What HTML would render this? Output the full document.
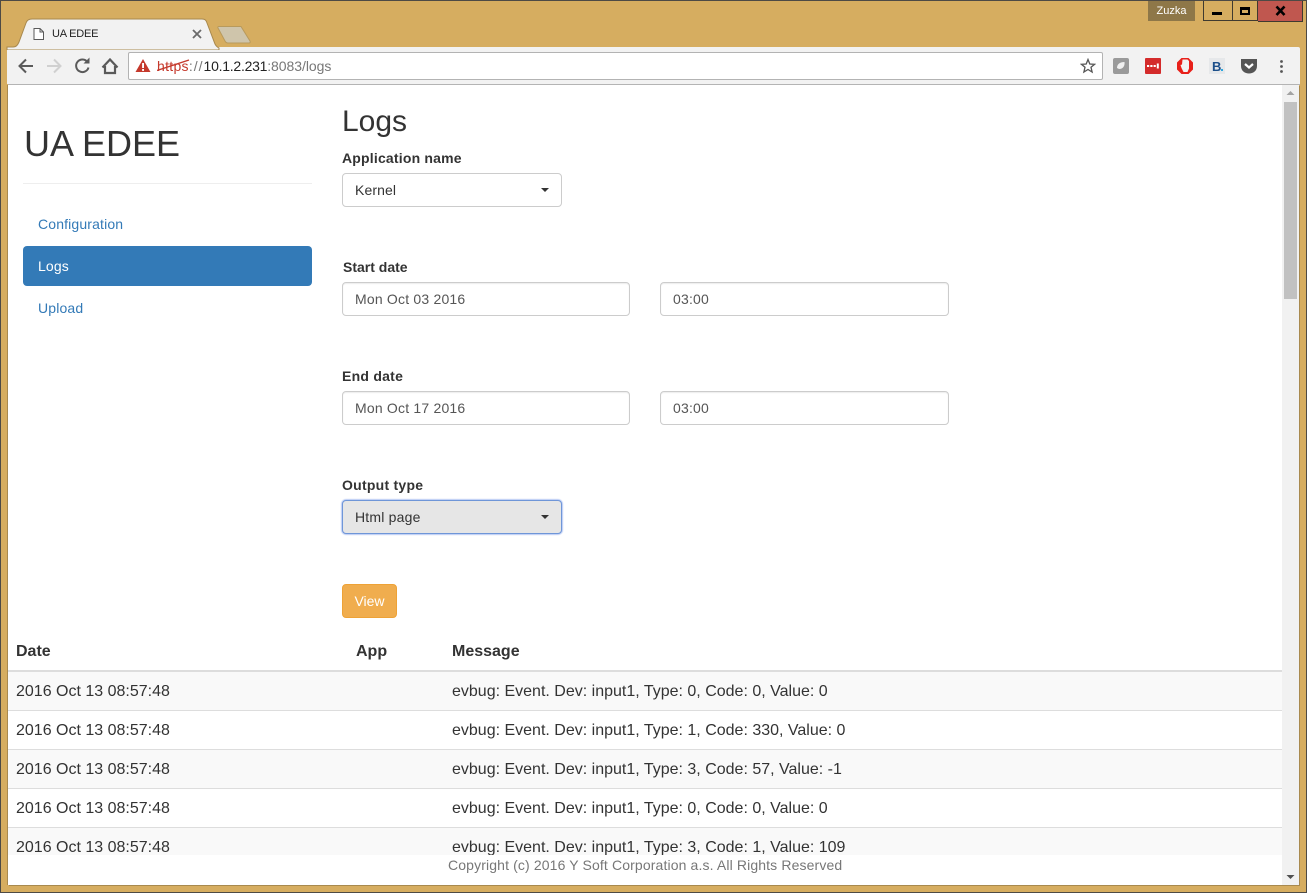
<!DOCTYPE html>
<html><head><meta charset="utf-8"><title>UA EDEE</title>
<style>
html,body{margin:0;padding:0;width:1307px;height:893px;overflow:hidden;background:#d6ad60;font-family:"Liberation Sans",Arial,sans-serif;font-size:14px;color:#333}
.a{position:absolute;white-space:nowrap}
.frame{position:absolute;left:0;top:0;width:1305px;height:891px;border:1px solid #4d4a45;pointer-events:none;z-index:9}
.toolbar{position:absolute;left:7px;top:47px;width:1293px;height:37px;background:#f2f2f2;border-radius:2px 2px 0 0}
.tline{position:absolute;left:8px;top:84px;width:1292px;height:1px;background:#b4b4b4}
.omni{position:absolute;left:128px;top:52px;width:973px;height:26px;background:#fff;border:1px solid #b3b3b3;border-radius:2px}
.content{position:absolute;left:8px;top:85px;width:1291px;height:800px;background:#fff;box-shadow:1px 1px 0 #a8894e,-1px 0 0 #a8894e}
.sb{position:absolute;left:1282px;top:85px;width:17px;height:800px;background:#f1f1f1}
.thumb{position:absolute;left:1284px;top:102px;width:13px;height:197px;background:#c1c1c1}
.lab{font-weight:bold;font-size:14px;line-height:20px;color:#333}
.ctl{position:absolute;box-sizing:border-box;height:34px;border:1px solid #ccc;border-radius:4px;background:#fff;line-height:32px;padding-left:12px;color:#555;font-size:14px;letter-spacing:.2px;box-shadow:inset 0 1px 1px rgba(0,0,0,.075)}
.sel{color:#333;box-shadow:none}
.caret{position:absolute;right:12px;top:14px;width:0;height:0;border-left:4px solid transparent;border-right:4px solid transparent;border-top:4px solid #333}
.row{position:absolute;left:8px;width:1274px;height:38px;border-bottom:1px solid #ddd}
.t{position:absolute;font-size:16px;line-height:20px;color:#333;white-space:nowrap}
.nav{font-size:14px;line-height:20px;color:#337ab7;letter-spacing:.15px}
</style></head><body>

<svg class="a" style="left:0;top:0;z-index:1" width="260" height="50">
<path d="M7 47 H13 C17 47 18 44 19 42 L26 23 C27 20 29 19 32 19 H202 C205 19 206 20 207 23 L215 44 C216 46 217 47 219 48 V50 H7Z" fill="#f2f2f2" stroke="#a8894e" stroke-width="1"/>
<path d="M218 28 C217.500 27 218 26.500 219 26.500 H241 L250 41 C250.500 42.500 250 43 249 43 H228 C226 43 225.500 42 225 41Z" fill="#cfc5ab" stroke="#b89a5c" stroke-width="1"/>
<path d="M34 28.500 H40 L43.500 32 V39.500 H34Z M40 28.500 V32 H43.500" fill="#fff" stroke="#5a5a5a" stroke-width="1"/>
<path d="M193 30 L201 38 M201 30 L193 38" stroke="#6a6a6a" stroke-width="1.800"/>
</svg>
<div class="a" style="left:52px;top:26px;font-size:11px;line-height:16px;color:#222;letter-spacing:-.2px;z-index:2">UA EDEE</div>

<div class="a" style="left:1148px;top:1px;width:47px;height:20px;background:#8e7748;color:#fff;font-size:11px;line-height:20px;text-align:center">Zuzka</div>
<div class="a" style="left:1203px;top:1px;width:28px;height:19px;border:1px solid #3f3a30;border-top:0"></div>
<div class="a" style="left:1231px;top:1px;width:26px;height:19px;border:1px solid #3f3a30;border-top:0;border-left:0"></div>
<div class="a" style="left:1258px;top:1px;width:45px;height:20px;background:#c0574f;border-bottom:1px solid #3f3a30;border-right:1px solid #3f3a30;box-sizing:border-box;height:21px"></div>
<div class="a" style="left:1212px;top:12px;width:10px;height:3px;background:#000"></div>
<div class="a" style="left:1240px;top:7px;width:6px;height:3px;border:2px solid #000;border-top-width:3px"></div>
<svg class="a" style="left:1274px;top:5px" width="14" height="12"><path d="M2.500 1.500 L10.500 10 M10.500 1.500 L2.500 10" stroke="#000" stroke-width="2.600"/></svg>

<div class="toolbar"></div><div class="tline"></div>
<div class="omni"></div>

<svg class="a" style="left:0;top:47px;z-index:2" width="130" height="37">
<path d="M33 19 H20 M26 12.500 L19.500 19 L26 25.500" fill="none" stroke="#5a5a5a" stroke-width="2"/>
<path d="M47 19 H60 M54 12.500 L60.500 19 L54 25.500" fill="none" stroke="#d0d0d0" stroke-width="2"/>
<path d="M87.500 15 A6.300 6.300 0 1 0 88.500 20.500" fill="none" stroke="#5a5a5a" stroke-width="2"/>
<path d="M83.500 16.500 H89.500 V10.500Z" fill="#5a5a5a"/>
<path d="M102.500 20.500 L110 12.500 L117.500 20.500 M105 19 V26 H115 V19" fill="none" stroke="#5a5a5a" stroke-width="2.200"/>
</svg>

<svg class="a" style="left:135px;top:57px;z-index:3" width="60" height="18">
<path d="M8 2 L15.500 15 H.5Z" fill="#c5392c"/>
<rect x="7.100" y="6" width="1.900" height="5" fill="#fff"/><rect x="7.100" y="12" width="1.900" height="1.900" fill="#fff"/>
</svg>
<div class="a" style="left:157px;top:58px;font-size:14px;line-height:16px;color:#c5392c;z-index:2"><span style="letter-spacing:.3px">https</span><span style="color:#777;letter-spacing:1px">://</span><span style="color:#222;letter-spacing:-.25px">10.1.2.231</span><span style="color:#777;letter-spacing:-.05px">:8083/logs</span></div>
<svg class="a" style="left:157px;top:58px;z-index:3" width="36" height="16"><path d="M0 12.500 L32 2" stroke="#c5392c" stroke-width="1.400" fill="none"/></svg>
<svg class="a" style="left:1080px;top:58px;z-index:3" width="16" height="16"><path d="M8 1.500 L9.800 6 L14.600 6.300 L11 9.300 L12.100 14 L8 11.500 L3.900 14 L5 9.300 L1.400 6.300 L6.200 6Z" fill="none" stroke="#555" stroke-width="1.300"/></svg>

<svg class="a" style="left:1110px;top:55px;z-index:3" width="190" height="24">
<rect x="3" y="3" width="16" height="16" rx="2" fill="#9a9a9a"/><path d="M7 13 C7 9 10 7 14.500 7 C15 11 13 14 9 14Z" fill="#f0f0f0"/>
<rect x="35" y="3" width="16" height="16" rx="1" fill="#d42b2b"/><path d="M37 11 h2.200 M40.300 11 h2.200 M43.600 11 h2.200 M47.800 8.500 v5" stroke="#fff" stroke-width="2"/>
<path d="M71.500 3 H78.500 L83 7.500 V14.500 L78.500 19 H71.500 L67 14.500 V7.500Z" fill="#e8201a"/>
<path d="M71.500 13 L70.500 10 L72 9.500 L72.500 4.500 H77.500 L79 6 V13.500 L77.500 17 H73.500Z" fill="#f2f2f2"/>
<rect x="99" y="3" width="16" height="16" fill="#e6e8ea"/>
<text x="102" y="16" font-family="Liberation Sans" font-size="13" font-weight="bold" fill="#1c4f8a">B</text><rect x="111" y="14" width="2" height="2" fill="#2aa7e0"/>
<path d="M131 4 H147 V11 C147 16 143 18.500 139 18.500 C135 18.500 131 16 131 11Z" fill="#555"/>
<path d="M135 9 L139 12.500 L143 9" fill="none" stroke="#fff" stroke-width="2.200"/>
<circle cx="171.500" cy="6.500" r="1.400" fill="#555"/><circle cx="171.500" cy="11.500" r="1.400" fill="#555"/><circle cx="171.500" cy="16.500" r="1.400" fill="#555"/>
</svg>

<div class="content"></div>

<div class="a" style="left:24px;top:124px;font-size:36px;line-height:40px;color:#333">UA EDEE</div>
<div class="a" style="left:23px;top:183px;width:289px;height:1px;background:#eee"></div>
<div class="a nav" style="left:38px;top:214px">Configuration</div>
<div class="a" style="left:23px;top:246px;width:289px;height:40px;background:#337ab7;border-radius:4px"></div>
<div class="a nav" style="left:38px;top:256px;color:#fff">Logs</div>
<div class="a nav" style="left:38px;top:298px">Upload</div>

<div class="a" style="left:342px;top:105px;font-size:30px;line-height:33px;color:#333">Logs</div>

<div class="a lab" style="left:342px;top:148px;letter-spacing:.19px">Application name</div>
<div class="ctl sel" style="left:342px;top:173px;width:220px;letter-spacing:.1px">Kernel<span class="caret"></span></div>

<div class="a lab" style="left:343px;top:257px">Start date</div>
<div class="ctl" style="left:342px;top:282px;width:288px">Mon Oct 03 2016</div>
<div class="ctl" style="left:660px;top:282px;width:289px">03:00</div>

<div class="a lab" style="left:342px;top:366px;letter-spacing:.25px">End date</div>
<div class="ctl" style="left:342px;top:391px;width:288px">Mon Oct 17 2016</div>
<div class="ctl" style="left:660px;top:391px;width:289px">03:00</div>

<div class="a lab" style="left:342px;top:475px;letter-spacing:.25px">Output type</div>
<div class="ctl sel" style="left:342px;top:500px;width:220px;background:#e6e6e6;border-color:#6f96d8;box-shadow:0 0 1px 1px rgba(102,140,230,.45)">Html page<span class="caret"></span></div>

<div class="a" style="left:342px;top:584px;width:55px;height:34px;box-sizing:border-box;background:#f0ad4e;border:1px solid #eea236;border-radius:4px;color:#fff;line-height:32px;text-align:center">View</div>

<div class="a" style="left:8px;top:670px;width:1274px;height:2px;background:#ddd"></div>
<div class="t" style="left:16px;top:642px;font-weight:bold">Date</div>
<div class="t" style="left:356px;top:642px;font-weight:bold">App</div>
<div class="t" style="left:452px;top:642px;font-weight:bold">Message</div>

<div class="row" style="top:672px;background:#f9f9f9"></div>
<div class="row" style="top:711px;background:#fff"></div>
<div class="row" style="top:750px;background:#f9f9f9"></div>
<div class="row" style="top:789px;background:#fff"></div>
<div class="row" style="top:828px;height:27px;background:#f9f9f9;border:0"></div>

<div class="t" style="left:16px;top:682px">2016 Oct 13 08:57:48</div><div class="t" style="left:452px;top:682px">evbug: Event. Dev: input1, Type: 0, Code: 0, Value: 0</div>
<div class="t" style="left:16px;top:721px">2016 Oct 13 08:57:48</div><div class="t" style="left:452px;top:721px">evbug: Event. Dev: input1, Type: 1, Code: 330, Value: 0</div>
<div class="t" style="left:16px;top:760px">2016 Oct 13 08:57:48</div><div class="t" style="left:452px;top:760px">evbug: Event. Dev: input1, Type: 3, Code: 57, Value: -1</div>
<div class="t" style="left:16px;top:799px">2016 Oct 13 08:57:48</div><div class="t" style="left:452px;top:799px">evbug: Event. Dev: input1, Type: 0, Code: 0, Value: 0</div>
<div class="t" style="left:16px;top:838px">2016 Oct 13 08:57:48</div><div class="t" style="left:452px;top:838px">evbug: Event. Dev: input1, Type: 3, Code: 1, Value: 109</div>

<div class="a" style="left:8px;top:855px;width:1274px;height:30px;background:#fff"></div>
<div class="a" style="left:448px;top:855px;font-size:14px;line-height:20px;color:#777;letter-spacing:.13px">Copyright (c) 2016 Y Soft Corporation a.s. All Rights Reserved</div>

<div class="sb"></div><div class="thumb"></div>
<svg class="a" style="left:1282px;top:85px" width="17" height="17"><path d="M4.500 10 L8.500 6 L12.500 10Z" fill="#a3a3a3"/></svg>
<svg class="a" style="left:1282px;top:868px" width="17" height="17"><path d="M4.500 7 L8.500 11 L12.500 7Z" fill="#505050"/></svg>

<div class="frame"></div>
</body></html>
